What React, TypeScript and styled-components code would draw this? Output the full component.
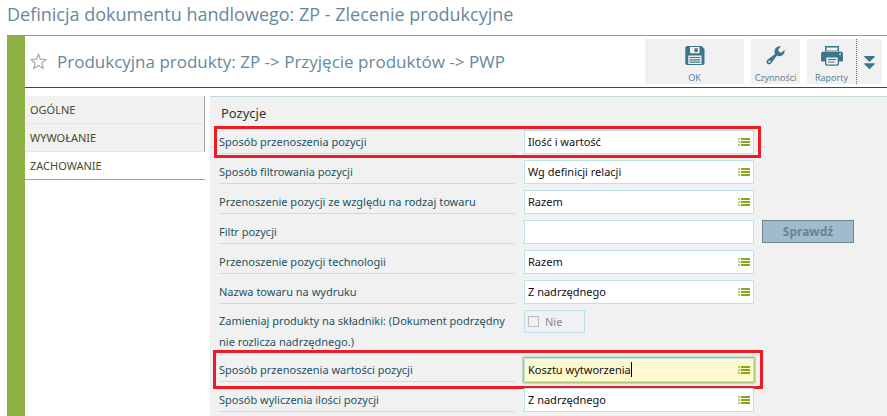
import React from "react";
import styled, { createGlobalStyle, css } from "styled-components";

const color = {
  green: "#8db043",
  heading: "#66889e",
  icon: "#3d758c",
  grey: "#f1f1f1",
  field: "#bde1e8",
  label: "#1b5363",
  nav: "#454a2c",
};

const GlobalStyle = createGlobalStyle`
  * { box-sizing: border-box; }
  body {
    margin: 0;
    background: #fff;
    font-family: "Noto Sans", "Open Sans", sans-serif;
  }
  button, input { font: inherit; margin: 0; }
`;

const Page = styled.div`
  display: flex;
  flex-direction: column;
  min-height: 100vh;
  padding-left: 7px;
`;

const PageTitle = styled.h1`
  margin: 0;
  height: 35px;
  line-height: 29px;
  font-family: "Open Sans", sans-serif;
  font-size: 18px;
  font-weight: 400;
  white-space: nowrap;
  color: ${color.heading};
`;

const Window = styled.main`
  flex: 1;
  display: flex;
  flex-direction: column;
  border-top: 1px solid ${color.green};
  border-left: 18px solid ${color.green};
`;

const Header = styled.header`
  display: flex;
  align-items: center;
  height: 52px;
  padding: 0 5px;
  border-bottom: 1px solid ${color.nav};
`;

const StarButton = styled.button`
  display: flex;
  padding: 0;
  border: 0;
  background: none;
`;

const RecordTitle = styled.h2`
  flex: 1;
  margin: 0 0 0 10px;
  font-family: "Open Sans", sans-serif;
  font-size: 17px;
  font-weight: 400;
  line-height: 24px;
  white-space: nowrap;
  color: ${color.heading};
`;

const Toolbar = styled.div`
  display: flex;
  gap: 7px;
`;

const ToolButton = styled.button<{ $wide?: boolean }>`
  display: flex;
  flex-direction: column;
  align-items: center;
  justify-content: space-between;
  width: ${(p) => (p.$wide ? 99 : 49)}px;
  height: 45px;
  padding: 7px 0 0;
  border: 0;
  background: ${color.grey};
  font-family: "Open Sans", sans-serif;
  font-size: 9px;
  line-height: 13px;
  color: #527c93;
`;

const SplitButton = styled.div`
  display: flex;
`;

const MoreButton = styled.button`
  display: flex;
  align-items: center;
  justify-content: center;
  width: 26px;
  height: 45px;
  padding: 3px 0 0;
  border: 0;
  border-left: 1px dotted ${color.icon};
  background: ${color.grey};
`;

const Body = styled.div`
  flex: 1;
  display: flex;
  gap: 5px;
  padding-top: 8px;
`;

const Nav = styled.nav`
  width: 180px;
  flex: none;
`;

const NavItem = styled.a<{ $active?: boolean }>`
  display: block;
  height: 28px;
  padding-left: 5px;
  font-size: 11px;
  line-height: 28px;
  text-decoration: none;
  color: ${color.nav};
  ${(p) =>
    p.$active
      ? css`
          border-bottom: 1px solid #95a5ab;
        `
      : css`
          background: ${color.grey};
          border-bottom: 1px solid #e6e6e6;
          border-right: 1px solid #95a5ab;
        `}
`;

const Panel = styled.section`
  flex: 1;
  padding: 0 9px 4px;
  border-top: 1px solid #c3d8de;
  background: ${color.grey};
`;

const PanelTitle = styled.h3`
  margin: 0;
  height: 33px;
  padding-left: 2px;
  font-size: 13px;
  font-weight: 400;
  line-height: 33px;
  color: #333;
`;

const Form = styled.form`
  display: flex;
  flex-direction: column;
  gap: 6px;
`;

const Row = styled.div`
  position: relative;
  display: grid;
  grid-template-columns: 296px 230px 91px;
  column-gap: 9px;
  align-items: start;
`;

const Label = styled.label<{ $plain?: boolean }>`
  height: ${(p) => (p.$plain ? 42 : 24)}px;
  border-bottom: ${(p) => (p.$plain ? "0" : `1px solid ${color.field}`)};
  font-size: 11px;
  line-height: 23px;
  white-space: nowrap;
  color: ${color.label};
`;

const LabelLine = styled.span`
  display: block;
  line-height: 21px;
`;

const Field = styled.div<{ $focused?: boolean }>`
  position: relative;
  display: flex;
  height: 24px;
  border: 1px solid ${color.field};
  background: #fff;
  ${(p) =>
    p.$focused &&
    css`
      background: #fff9cf;
      box-shadow: 0 0 2px 1px ${color.green};
    `}
`;

const TextInput = styled.input`
  flex: 1;
  min-width: 0;
  padding: 0 0 2px 3px;
  border: 0;
  outline: 0;
  background: transparent;
  font-size: 11px;
  color: #111;
  caret-color: transparent;
`;

const Caret = styled.span`
  position: absolute;
  top: 3px;
  left: 106px;
  width: 1px;
  height: 15px;
  background: #000;
`;

const ListButton = styled.button`
  display: flex;
  align-items: center;
  padding: 0 3px;
  border: 0;
  background: none;
`;

const CheckField = styled.label`
  display: flex;
  align-items: center;
  gap: 6px;
  width: 61px;
  height: 23px;
  padding-left: 3px;
  border: 1px solid ${color.field};
  font-size: 11px;
  color: #8a8a8a;
`;

const Checkbox = styled.input`
  appearance: none;
  width: 11px;
  height: 11px;
  border: 1px solid #bdbdbd;
`;

const CheckButton = styled.button`
  height: 23px;
  margin-left: -1px;
  padding: 0;
  border: 1px solid #6e8793;
  background: #a0bccc;
  font-size: 12px;
  font-weight: 700;
  line-height: 21px;
  color: #6d828d;
`;

const Highlight = styled.div<{ $tall?: boolean }>`
  position: absolute;
  top: ${(p) => (p.$tall ? -8 : -4)}px;
  bottom: ${(p) => (p.$tall ? -7 : -4)}px;
  left: ${(p) => (p.$tall ? -6 : -5)}px;
  width: ${(p) => (p.$tall ? 550 : 547)}px;
  border: 3px solid #ed1c24;
  pointer-events: none;
`;

const StarIcon = () => (
  <svg width="17" height="17" viewBox="0 0 17 17" fill="none" stroke="#aaa" strokeWidth="1.2" aria-hidden="true">
    <path d="M8.5 1.2 10.5 6.2 16 6.5 11.8 10 13.2 15.4 8.5 12.4 3.8 15.4 5.2 10 1 6.5 6.5 6.2Z" />
  </svg>
);

const SaveIcon = () => (
  <svg width="20" height="19" viewBox="0 0 20 19" aria-hidden="true">
    <path fill={color.icon} d="M2 0H16.5L19.5 3V17.2Q19.5 19 17.7 19H2Q.3 19 .3 17.2V1.8Q.3 0 2 0Z" />
    <path fill="#f1f1f1" d="M5 1H14.5V6.3Q14.5 7.3 13.5 7.3H6Q5 7.3 5 6.3ZM3.3 9.5H16.5V18H3.3Z" />
    <path fill={color.icon} d="M9.5 2.3H12.7V6H9.5ZM4.5 11H15.3V12.1H4.5ZM4.5 13.3H15.3V14.4H4.5ZM4.5 15.6H15.3V16.7H4.5Z" />
  </svg>
);

const WrenchIcon = () => (
  <svg width="19" height="19" viewBox="0 0 19 19" aria-hidden="true">
    <path
      fill={color.icon}
      fillRule="evenodd"
      d="M14.8.5 12.2 3.4 12.9 6 15.6 6.6 18.4 3.9C19.2 6.7 17.6 9.4 14.8 10 13.4 10.3 12 10.1 11 9.6L5.6 16.7C4.5 18.4 2.6 18.8 1.3 17.7 0 16.5.2 14.7 1.8 13.5L9 8C8.3 6.8 8.2 5.2 8.8 3.7 9.8 1.2 12.2-.2 14.8.5ZM3.4 14.6A1.1 1.1 0 1 0 3.4 16.8 1.1 1.1 0 1 0 3.4 14.6Z"
    />
  </svg>
);

const PrinterIcon = () => (
  <svg width="22" height="20" viewBox="0 0 22 20" aria-hidden="true">
    <path fill={color.icon} d="M4 0H18V5H4Z" />
    <path fill="#f1f1f1" d="M5.5 1.5H16.5V4.6H5.5Z" />
    <path fill={color.icon} d="M2.5 5.5H19.5Q22 5.5 22 8V14.5Q22 15.5 21 15.5H18V18Q18 19.8 16.2 19.8H5.8Q4 19.8 4 18V15.5H1Q0 15.5 0 14.5V8Q0 5.5 2.5 5.5Z" />
    <path fill="#f1f1f1" d="M5.3 11.5H16.7V17.6Q16.7 18.6 15.7 18.6H6.3Q5.3 18.6 5.3 17.6ZM18.3 7.5H19.8V9H18.3Z" />
    <path fill={color.icon} d="M7 13H15V14H7ZM7 15.5H13.5V16.5H7Z" />
  </svg>
);

const ChevronsIcon = () => (
  <svg width="11" height="14" viewBox="0 0 11 14" fill={color.icon} aria-hidden="true">
    <path d="M.3 0H10.7V1L5.5 6 .3 1ZM.3 7.3H10.7V8.3L5.5 13.3.3 8.3Z" />
  </svg>
);

const ListIcon = () => (
  <svg width="12" height="8" viewBox="0 0 12 8" fill="#84a818" aria-hidden="true">
    <path fillOpacity="0.6" d="M0 0H2V2H0ZM0 3H2V5H0ZM0 6H2V8H0Z" />
    <path d="M3 0H12V2H3ZM3 3H12V5H3ZM3 6H12V8H3Z" />
  </svg>
);

type RowData = {
  id: string;
  label: string;
  value: string;
  list?: boolean;
  focused?: boolean;
  highlight?: "short" | "tall";
  action?: string;
};

const topRows: RowData[] = [
  { id: "przenoszenie", label: "Sposób przenoszenia pozycji", value: "Ilość i wartość", list: true, highlight: "short" },
  { id: "filtrowanie", label: "Sposób filtrowania pozycji", value: "Wg definicji relacji", list: true },
  { id: "rodzaj", label: "Przenoszenie pozycji ze względu na rodzaj towaru", value: "Razem", list: true },
  { id: "filtr", label: "Filtr pozycji", value: "", action: "Sprawdź" },
  { id: "technologia", label: "Przenoszenie pozycji technologii", value: "Razem", list: true },
  { id: "nazwa", label: "Nazwa towaru na wydruku", value: "Z nadrzędnego", list: true },
];

const bottomRows: RowData[] = [
  { id: "wartosc", label: "Sposób przenoszenia wartości pozycji", value: "Kosztu wytworzenia", list: true, focused: true, highlight: "tall" },
  { id: "ilosc", label: "Sposób wyliczenia ilości pozycji", value: "Z nadrzędnego", list: true },
];

const FieldRow = ({ row }: { row: RowData }) => (
  <Row>
    <Label htmlFor={row.id}>{row.label}</Label>
    <Field $focused={row.focused}>
      <TextInput id={row.id} type="text" defaultValue={row.value} />
      {row.focused && <Caret />}
      {row.list && (
        <ListButton type="button" aria-label={`Lista: ${row.label}`}>
          <ListIcon />
        </ListButton>
      )}
    </Field>
    {row.action && (
      <CheckButton type="button" disabled>
        {row.action}
      </CheckButton>
    )}
    {row.highlight && <Highlight $tall={row.highlight === "tall"} />}
  </Row>
);

export default function App() {
  return (
    <>
      <GlobalStyle />
      <Page>
        <PageTitle>Definicja dokumentu handlowego: ZP - Zlecenie produkcyjne</PageTitle>
        <Window>
          <Header>
            <StarButton type="button" aria-label="Ulubione">
              <StarIcon />
            </StarButton>
            <RecordTitle>Produkcyjna produkty: ZP -&gt; Przyjęcie produktów -&gt; PWP</RecordTitle>
            <Toolbar>
              <ToolButton type="button" $wide>
                <SaveIcon />
                OK
              </ToolButton>
              <ToolButton type="button">
                <WrenchIcon />
                Czynności
              </ToolButton>
              <SplitButton>
                <ToolButton type="button">
                  <PrinterIcon />
                  Raporty
                </ToolButton>
                <MoreButton type="button" aria-label="Więcej">
                  <ChevronsIcon />
                </MoreButton>
              </SplitButton>
            </Toolbar>
          </Header>
          <Body>
            <Nav>
              <NavItem href="#ogolne">OGÓLNE</NavItem>
              <NavItem href="#wywolanie">WYWOŁANIE</NavItem>
              <NavItem href="#zachowanie" $active>
                ZACHOWANIE
              </NavItem>
            </Nav>
            <Panel>
              <PanelTitle>Pozycje</PanelTitle>
              <Form>
                {topRows.map((row) => (
                  <FieldRow key={row.id} row={row} />
                ))}
                <Row>
                  <Label htmlFor="zamieniaj" $plain>
                    <LabelLine>Zamieniaj produkty na składniki: (Dokument podrzędny</LabelLine>
                    <LabelLine>nie rozlicza nadrzędnego.)</LabelLine>
                  </Label>
                  <CheckField>
                    <Checkbox id="zamieniaj" type="checkbox" disabled />
                    Nie
                  </CheckField>
                </Row>
                {bottomRows.map((row) => (
                  <FieldRow key={row.id} row={row} />
                ))}
              </Form>
            </Panel>
          </Body>
        </Window>
      </Page>
    </>
  );
}
